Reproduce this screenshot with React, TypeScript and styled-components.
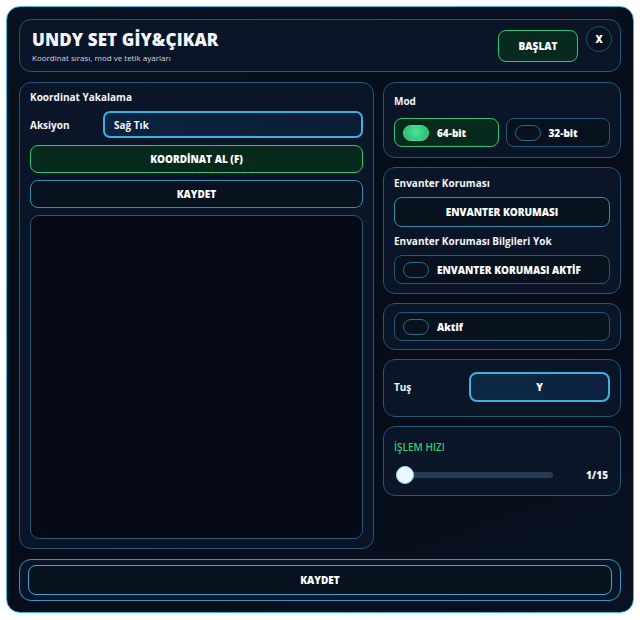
import * as React from 'react';
import styled, { createGlobalStyle } from 'styled-components';

const GlobalStyle = createGlobalStyle`
  html, body {
    margin: 0;
    padding: 0;
    background: #ffffff;
  }
  * {
    box-sizing: border-box;
  }
  body {
    font-family: 'Open Sans', 'Noto Sans', sans-serif;
    color: #f2f6fa;
  }
`;

export default function App() {
  const [mode, setMode] = React.useState<'64' | '32'>('64');
  const [invActive, setInvActive] = React.useState(false);
  const [active, setActive] = React.useState(false);
  const [speed, setSpeed] = React.useState(1);

  return (
    <>
      <GlobalStyle />
      <Window>
        <Header>
          <div>
            <Title>UNDY SET GİY&amp;ÇIKAR</Title>
            <Subtitle>Koordinat sırası, mod ve tetik ayarları</Subtitle>
          </div>
          <HeaderActions>
            <StartButton>BAŞLAT</StartButton>
            <CloseButton>X</CloseButton>
          </HeaderActions>
        </Header>

        <Columns>
          <LeftCard>
            <CardTitle>Koordinat Yakalama</CardTitle>
            <ActionRow>
              <Label>Aksiyon</Label>
              <SelectBox>Sağ Tık</SelectBox>
            </ActionRow>
            <WideButton variant="green">KOORDİNAT AL (F)</WideButton>
            <WideButton variant="plain">KAYDET</WideButton>
            <ListBox />
          </LeftCard>

          <RightColumn>
            <ModCard>
              <CardTitle>Mod</CardTitle>
              <ModRow>
                <ToggleButton on={mode === '64'} onClick={() => setMode('64')}>
                  <Switch on={mode === '64'} />
                  64-bit
                </ToggleButton>
                <ToggleButton on={mode === '32'} onClick={() => setMode('32')}>
                  <Switch on={mode === '32'} />
                  32-bit
                </ToggleButton>
              </ModRow>
            </ModCard>

            <GuardCard>
              <CardTitle>Envanter Koruması</CardTitle>
              <WideButton variant="plain" tall>ENVANTER KORUMASI</WideButton>
              <CardTitle>Envanter Koruması Bilgileri Yok</CardTitle>
              <ToggleButton on={invActive} onClick={() => setInvActive(!invActive)}>
                <Switch on={invActive} />
                ENVANTER KORUMASI AKTİF
              </ToggleButton>
            </GuardCard>

            <SlimCard>
              <ToggleButton on={active} onClick={() => setActive(!active)}>
                <Switch on={active} />
                Aktif
              </ToggleButton>
            </SlimCard>

            <KeyCard>
              <Label>Tuş</Label>
              <KeyButton>Y</KeyButton>
            </KeyCard>

            <SpeedCard>
              <SpeedTitle>İŞLEM HIZI</SpeedTitle>
              <SliderRow>
                <Slider
                  type="range"
                  min={1}
                  max={15}
                  value={speed}
                  onChange={(e) => setSpeed(Number(e.target.value))}
                />
                <SpeedValue>{speed}/15</SpeedValue>
              </SliderRow>
            </SpeedCard>
          </RightColumn>
        </Columns>

        <Footer>
          <FooterButton>KAYDET</FooterButton>
        </Footer>
      </Window>
    </>
  );
}

const Window = styled.div`
  margin: 6px;
  width: 628px;
  height: 607px;
  padding: 12px 12px 11px;
  display: flex;
  flex-direction: column;
  gap: 10px;
  border-radius: 14px;
  border: 1px solid #3fb4dc;
  background: linear-gradient(160deg, #08111f 0%, #060c18 60%, #081222 100%);
`;

const Header = styled.header`
  height: 53px;
  flex-shrink: 0;
  display: flex;
  align-items: center;
  justify-content: space-between;
  padding: 0 8px 0 12px;
  border-radius: 12px;
  border: 1px solid #22587a;
  background: #0a1628;
`;

const Title = styled.h1`
  margin: 0;
  font-size: 17px;
  line-height: 22px;
  font-weight: 800;
  letter-spacing: 0.1px;
`;

const Subtitle = styled.p`
  margin: 2px 0 0;
  font-size: 8px;
  line-height: 10px;
  color: #c9d6e2;
`;

const HeaderActions = styled.div`
  display: flex;
  align-items: center;
  gap: 8px;
`;

const StartButton = styled.button`
  width: 80px;
  height: 32px;
  border-radius: 8px;
  border: 1px solid #2fc777;
  background: #082a1e;
  color: #ffffff;
  font-family: inherit;
  font-size: 10px;
  font-weight: 800;
`;

const CloseButton = styled.button`
  align-self: flex-start;
  width: 26px;
  height: 26px;
  margin-top: -4px;
  border-radius: 50%;
  border: 1px solid #24506e;
  background: #08131f;
  color: #ffffff;
  font-family: inherit;
  font-size: 10px;
  font-weight: 800;
  padding: 0;
`;

const Columns = styled.div`
  flex: 1;
  display: flex;
  gap: 9px;
  min-height: 0;
`;

const Card = styled.section`
  display: flex;
  flex-direction: column;
  gap: 6px;
  padding: 8px 10px 9px;
  border-radius: 12px;
  border: 1px solid #22587a;
  background: #0a1527;
`;

const LeftCard = styled(Card)`
  width: 355px;
  flex-shrink: 0;
  gap: 7px;
  padding: 7px 10px 9px;
`;

const ModCard = styled(Card)`
  gap: 10px;
  padding: 11px 10px 10px;
`;

const GuardCard = styled(Card)`
  gap: 7px;
  padding: 8px 10px 9px;
`;

const SlimCard = styled(Card)`
  padding: 8px 10px;
`;

const KeyCard = styled(Card)`
  flex-direction: row;
  align-items: center;
  justify-content: space-between;
  padding: 12px 10px 14px;
`;

const SpeedCard = styled(Card)`
  gap: 12px;
  padding: 14px 10px 10px;
`;

const RightColumn = styled.div`
  flex: 1;
  display: flex;
  flex-direction: column;
  gap: 9px;
`;

const CardTitle = styled.h2`
  margin: 0;
  font-size: 10px;
  line-height: 14px;
  font-weight: 700;
`;

const Label = styled.span`
  font-size: 10px;
  font-weight: 700;
`;

const ActionRow = styled.div`
  display: flex;
  align-items: center;
  ${Label} {
    width: 73px;
  }
`;

const SelectBox = styled.div`
  flex: 1;
  height: 27px;
  display: flex;
  align-items: center;
  padding: 0 9px;
  border-radius: 7px;
  border: 2px solid #3ab2e0;
  background: linear-gradient(90deg, #0c2440 0%, #0b1d34 100%);
  font-size: 10px;
  font-weight: 700;
`;

const WideButton = styled.button<{ variant: 'green' | 'plain'; tall?: boolean }>`
  width: 100%;
  height: ${({ tall }) => (tall ? '30px' : '28px')};
  flex-shrink: 0;
  border-radius: 8px;
  border: 1px solid ${({ variant }) => (variant === 'green' ? '#2fc777' : '#2f8fb4')};
  background: ${({ variant }) => (variant === 'green' ? '#082a1c' : '#08121f')};
  color: #ffffff;
  font-family: inherit;
  font-size: 10px;
  font-weight: 800;
`;

const ListBox = styled.div`
  flex: 1;
  border-radius: 9px;
  border: 1px solid #22587a;
  background: #050a16;
`;

const ModRow = styled.div`
  display: flex;
  gap: 7px;

  & > button {
    flex: 1;
  }
`;

const ToggleButton = styled.button<{ on: boolean }>`
  width: 100%;
  height: 29px;
  flex-shrink: 0;
  display: flex;
  align-items: center;
  gap: 8px;
  padding: 0 8px;
  border-radius: 8px;
  border: 1px solid ${({ on }) => (on ? '#2fc777' : '#22587a')};
  background: ${({ on }) => (on ? '#082a1c' : '#08121f')};
  color: #ffffff;
  font-family: inherit;
  font-size: 10px;
  font-weight: 800;
  text-align: left;
`;

const Switch = styled.span<{ on: boolean }>`
  width: 26px;
  height: 16px;
  flex-shrink: 0;
  border-radius: 8px;
  border: 1px solid ${({ on }) => (on ? '#3fe08c' : '#2b6a8e')};
  background: ${({ on }) =>
    on ? 'radial-gradient(circle at 50% 40%, #4ae39a 0%, #27b56c 100%)' : 'transparent'};
`;

const KeyButton = styled.button`
  width: 141px;
  height: 30px;
  border-radius: 8px;
  border: 2px solid #3ab2e0;
  background: linear-gradient(90deg, #0c2742 0%, #0c2240 100%);
  color: #ffffff;
  font-family: inherit;
  font-size: 10px;
  font-weight: 800;
`;

const SpeedTitle = styled.h3`
  margin: 0;
  font-size: 10px;
  line-height: 12px;
  font-weight: 600;
  color: #34c97a;
`;

const SliderRow = styled.div`
  display: flex;
  align-items: center;
  justify-content: space-between;
  height: 20px;
  padding: 0 2px;
`;

const Slider = styled.input`
  -webkit-appearance: none;
  appearance: none;
  width: 157px;
  height: 6px;
  margin: 0;
  border-radius: 3px;
  background: #243d55;
  outline: none;

  &::-webkit-slider-thumb {
    -webkit-appearance: none;
    appearance: none;
    width: 18px;
    height: 18px;
    border-radius: 50%;
    background: #e8f8fc;
    border: 1px solid #9adcf0;
  }
`;

const SpeedValue = styled.span`
  font-size: 10px;
  font-weight: 800;
`;

const Footer = styled.footer`
  height: 42px;
  flex-shrink: 0;
  padding: 5px 8px;
  border-radius: 12px;
  border: 1px solid #3399c4;
  background: #0a1628;
`;

const FooterButton = styled.button`
  width: 100%;
  height: 100%;
  border-radius: 8px;
  border: 1px solid #3aa8d4;
  background: #08121f;
  color: #ffffff;
  font-family: inherit;
  font-size: 10px;
  font-weight: 800;
`;
